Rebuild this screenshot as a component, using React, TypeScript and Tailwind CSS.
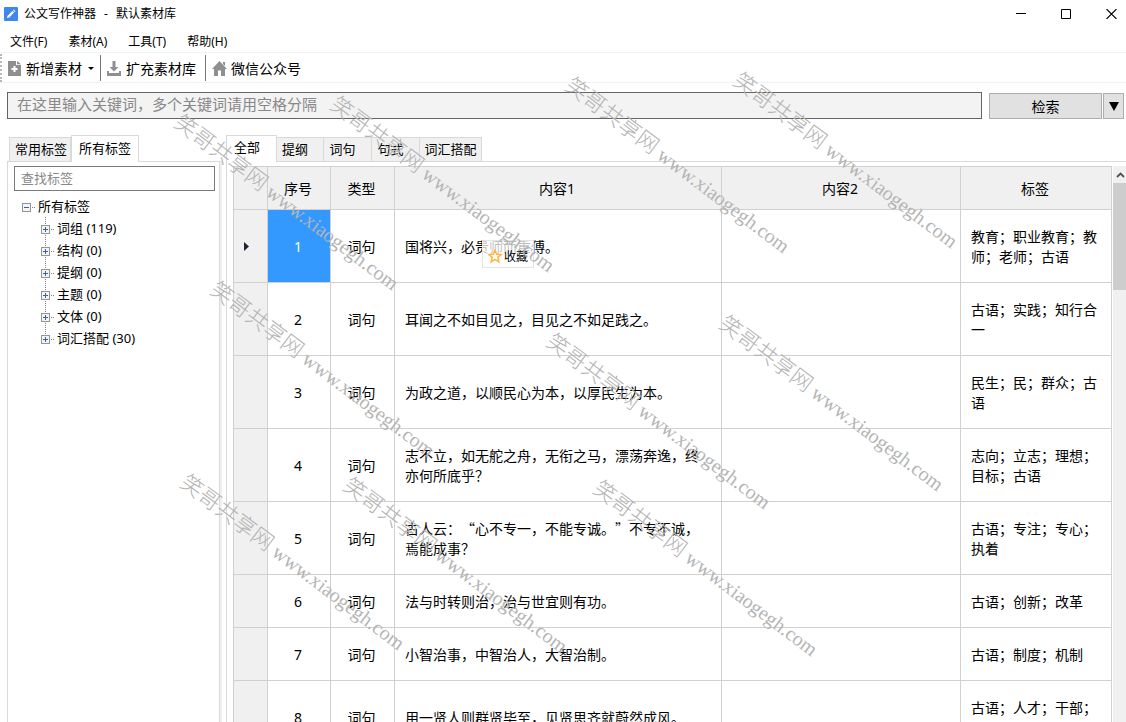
import React from "react";

const TOP_MENU = ["文件(F)", "素材(A)", "工具(T)", "帮助(H)"];

const TREE = ["词组 (119)", "结构 (0)", "提纲 (0)", "主题 (0)", "文体 (0)", "词汇搭配 (30)"];

const KIND_TABS = [
  { label: "提纲", width: "w-[47px] pr-[10px]" },
  { label: "词句", width: "w-12 pr-[10px]" },
  { label: "句式", width: "w-12 pr-[10px]" },
  { label: "词汇搭配", width: "w-[62px]" },
];

const ROWS = [
  { text: "国将兴，必贵师而重傅。", tags: "教育；职业教育；教师；老师；古语" },
  { text: "耳闻之不如目见之，目见之不如足践之。", tags: "古语；实践；知行合一" },
  { text: "为政之道，以顺民心为本，以厚民生为本。", tags: "民生；民；群众；古语" },
  { text: "志不立，如无舵之舟，无衔之马，漂荡奔逸，终亦何所底乎？", tags: "志向；立志；理想；目标；古语" },
  { text: "古人云：“心不专一，不能专诚。”不专不诚，焉能成事？", tags: "古语；专注；专心；执着" },
  { text: "法与时转则治，治与世宜则有功。", tags: "古语；创新；改革" },
  { text: "小智治事，中智治人，大智治制。", tags: "古语；制度；机制" },
  { text: "用一贤人则群贤毕至，见贤思齐就蔚然成风。", tags: "古语；人才；干部；\n\u00a0" },
];

const MARKS = [
  "left-[177px] top-[108px]",
  "left-[333px] top-[90px]",
  "left-[568px] top-[71px]",
  "left-[736px] top-[66px]",
  "left-[213px] top-[275px]",
  "left-[549px] top-[327px]",
  "left-[722px] top-[309px]",
  "left-[183px] top-[468px]",
  "left-[346px] top-[471px]",
  "left-[596px] top-[474px]",
];

function ExpandBox({ open = false }: { open?: boolean }) {
  return (
    <svg width="14" height="9" viewBox="0 0 14 9" shapeRendering="crispEdges" className="mt-[3px] shrink-0" aria-hidden="true">
      <rect x="0.5" y="0.5" width="8" height="8" rx="1" fill="#f4f4f4" stroke="#949494" />
      <path d="M2 4.5h5" stroke="#3b62a8" />
      {!open && <path d="M4.5 2v5" stroke="#3b62a8" />}
      <path d="M10 4.5h1M12 4.5h1" stroke="#808080" />
    </svg>
  );
}

function TitleBar() {
  return (
    <header className="flex h-7 shrink-0 items-center pl-1">
      <svg width="14" height="14" viewBox="0 0 14 14" aria-hidden="true">
        <rect width="14" height="14" rx="1" fill="#3f87f0" />
        <path d="M3 11l.6-2.3 4.8-4.8 1.7 1.7-4.8 4.8z" fill="#fff" />
        <path d="M9 3.3l.8-.8 1.7 1.7-.8.8z" fill="#fff" />
      </svg>
      <h1 className="ml-[6px] flex flex-1 gap-2 text-xs">
        <span>公文写作神器</span>
        <span>-</span>
        <span>默认素材库</span>
      </h1>
      <div className="flex">
        <button aria-label="最小化" className="flex h-7 w-[45px] items-center justify-center">
          <svg width="10" height="10" viewBox="0 0 10 10"><path d="M0 4.5h10" stroke="#000" /></svg>
        </button>
        <button aria-label="最大化" className="flex h-7 w-[46px] items-center justify-center">
          <svg width="10" height="10" viewBox="0 0 10 10"><path d="M.5.5h9v9h-9z" fill="none" stroke="#000" /></svg>
        </button>
        <button aria-label="关闭" className="flex h-7 w-[37px] items-center justify-center pl-2">
          <svg width="11" height="10" viewBox="0 0 11 10"><path d="M.5 0l10 10M10.500 0l-10 10" stroke="#000" strokeWidth="1.100" /></svg>
        </button>
      </div>
    </header>
  );
}

function Toolbar() {
  return (
    <div className="flex h-[31px] shrink-0 items-center border-y border-[#eef5f5] text-sm">
      <span className="h-7 border-l-2 border-dotted border-[#b8b8b8]" />
      <button className="flex items-center pl-[6px] pt-px">
        <svg width="13" height="15" viewBox="0 0 13 15" aria-hidden="true">
          <path d="M0 0h8v4h5v11H0z" fill="#8f8f8f" />
          <path d="M9 0l4 3.300H9z" fill="#8f8f8f" />
          <path d="M6.500 5v6M3.500 8h6" stroke="#fff" strokeWidth="2" />
        </svg>
        <span className="ml-[5px] pt-px">新增素材</span>
        <svg width="6" height="3" viewBox="0 0 6 3" className="ml-[6px]" aria-hidden="true"><path d="M0 0h6L3 3z" /></svg>
      </button>
      <span className="ml-[6px] h-[26px] w-px bg-[#777]" />
      <button className="flex items-center pl-[6px] pt-px">
        <svg width="14" height="15" viewBox="0 0 14 15" aria-hidden="true">
          <path d="M5.500 0h3v6h3L7 10.500 2.500 6h3z" fill="#8f8f8f" />
          <path d="M0 10h2v2h10v-2h2v5H0z" fill="#8f8f8f" />
        </svg>
        <span className="ml-[5px] pt-px">扩充素材库</span>
      </button>
      <span className="ml-[9px] h-[26px] w-px bg-[#777]" />
      <button className="flex items-center pl-[6px] pt-px">
        <svg width="15" height="15" viewBox="0 0 15 15" aria-hidden="true">
          <path d="M7.500 0L15 8h-2v7H9V9.500H6V15H2V8H0z" fill="#8f8f8f" />
          <path d="M11 1h2v4l-2-2z" fill="#8f8f8f" />
        </svg>
        <span className="ml-1 pt-px">微信公众号</span>
      </button>
    </div>
  );
}

function SearchRow() {
  return (
    <form className="mt-[9px] flex h-[27px] shrink-0 items-end pl-[7px] pr-[2px]" onSubmit={(e) => e.preventDefault()}>
      <input
        aria-label="关键词"
        placeholder="在这里输入关键词，多个关键词请用空格分隔"
        className="h-[27px] min-w-0 flex-1 border border-[#646464] bg-[#f3f3f3] px-[9px] pb-[3px] text-[15px] outline-none placeholder:text-[#888]"
      />
      <button className="ml-[7px] h-[26px] w-[113px] border border-[#adadad] bg-[#e1e1e1] pt-px text-sm">检索</button>
      <button aria-label="检索选项" className="ml-px flex h-[26px] w-[21px] items-center justify-center border border-[#adadad] bg-[#e1e1e1]">
        <svg width="10" height="9" viewBox="0 0 10 9" aria-hidden="true"><path d="M0 0h10L5 9z" /></svg>
      </button>
    </form>
  );
}

function TagPanel() {
  return (
    <aside className="ml-[7px] flex w-[213px] shrink-0 flex-col">
      <div role="tablist" className="flex items-end pl-[2px] text-[13px]">
        <button role="tab" aria-selected="false" className="h-6 w-[62px] border border-b-0 border-[#d9d9d9] bg-[#f0f0f0] pl-[2px] pr-0">常用标签</button>
        <button role="tab" aria-selected="true" className="relative -mb-px h-[27px] w-[68px] border border-b-0 border-[#d9d9d9] bg-white">所有标签</button>
      </div>
      <div className="flex-1 border border-b-0 border-[#d9d9d9] px-[6px] pt-[3px]">
        <input
          aria-label="查找标签"
          placeholder="查找标签"
          className="h-[25px] w-[201px] border border-[#7a7a7a] px-[6px] text-[13px] outline-none placeholder:text-[#888]"
        />
        <div role="tree" className="mt-1 pl-2 text-[13px] leading-[22px]">
          <div role="treeitem" aria-expanded="true">
            <div className="flex items-center gap-[2px]"><ExpandBox open />所有标签</div>
            <div role="group" className="relative pl-[19px]">
              <span className="absolute bottom-[11px] left-[23px] top-0 border-l border-dotted border-[#808080]" />
              {TREE.map((label) => (
                <div key={label} role="treeitem" aria-expanded="false" className="relative flex items-center gap-[2px]">
                  <ExpandBox />
                  {label}
                </div>
              ))}
            </div>
          </div>
        </div>
      </div>
    </aside>
  );
}

function FavoriteTip() {
  return (
    <button className="absolute left-[87px] top-[30px] flex h-7 w-[52px] items-center gap-[2px] border border-[#e4e4e4] bg-white/75 pl-[5px] pt-1 text-xs">
      <svg width="14" height="14" viewBox="0 0 14 14" aria-hidden="true">
        <path d="M7 1l1.700 4.200 4.500.3-3.400 2.900 1 4.400L7 10.400l-3.800 2.400 1-4.400L.8 5.500l4.500-.3z" fill="none" stroke="#ffb43c" strokeWidth="1.500" />
      </svg>
      收藏
    </button>
  );
}

function MaterialTable() {
  return (
    <table className="w-full table-fixed border-separate border-spacing-0 border-l border-t border-[#d0d0d0] text-sm leading-5">
      <colgroup>
        <col className="w-[34px]" />
        <col className="w-[63px]" />
        <col className="w-16" />
        <col className="w-[327px]" />
        <col />
        <col className="w-[151px]" />
      </colgroup>
      <thead>
        <tr className="h-[43px] bg-[#f0f0f0]">
          <th className="border-b border-r border-[#d0d0d0]" aria-label="当前行" />
          {["序号", "类型", "内容1", "内容2", "标签"].map((name) => (
            <th key={name} scope="col" className="border-b border-r border-[#d0d0d0] pr-[2px] pt-[2px] font-normal">{name}</th>
          ))}
        </tr>
      </thead>
      <tbody>
        {ROWS.map((row, i) => (
          <tr key={row.text}>
            <td className="border-b border-r border-[#d0d0d0] bg-[#f0f0f0]">
              {i === 0 && (
                <svg width="5" height="9" viewBox="0 0 5 9" className="ml-[10px]" aria-hidden="true"><path d="M0 0l5 4.500L0 9z" fill="#223" /></svg>
              )}
            </td>
            <td className={i === 0 ? "border-b border-r border-[#d0d0d0] bg-[#3399ff] pr-[2px] pt-[2px] text-center text-white" : "border-b border-r border-[#d0d0d0] pr-[2px] pt-[2px] text-center"}>{i + 1}</td>
            <td className="border-b border-r border-[#d0d0d0] pr-[2px] pt-[2px] text-center">词句</td>
            <td className="relative border-b border-r border-[#d0d0d0] px-[10px] py-4 font-['Noto_Sans_CJK_SC',sans-serif] [text-spacing-trim:space-all]">
              {row.text}
              {i === 0 && <FavoriteTip />}
            </td>
            <td className="border-b border-r border-[#d0d0d0]" />
            <td className="whitespace-pre-line border-b border-r border-[#d0d0d0] px-[10px] py-4 font-['Noto_Sans_CJK_SC',sans-serif]">{row.tags}</td>
          </tr>
        ))}
      </tbody>
    </table>
  );
}

function MaterialPanel() {
  return (
    <main className="flex min-w-0 flex-1 flex-col">
      <div role="tablist" className="flex items-end text-[13px]">
        <button role="tab" aria-selected="true" className="relative -mb-px h-[27px] w-[51px] border border-b-0 border-[#d9d9d9] bg-white pb-[2px] pr-[9px]">全部</button>
        {KIND_TABS.map((tab) => (
          <button key={tab.label} role="tab" aria-selected="false" className={`${tab.width} h-6 whitespace-nowrap border border-b-0 border-l-0 border-[#d9d9d9] bg-[#f0f0f0]`}>
            {tab.label}
          </button>
        ))}
      </div>
      <div className="flex min-h-0 flex-1 overflow-hidden border-l border-t border-[#d9d9d9] pl-[6px] pt-1">
        <div className="min-w-0 flex-1 overflow-hidden">
          <MaterialTable />
        </div>
        <div className="ml-px w-[13px] shrink-0 bg-[#f0f0f0]">
          <button aria-label="向上滚动" className="flex h-[17px] w-full items-center justify-center pl-[2px]">
            <svg width="9" height="6" viewBox="0 0 9 6"><path d="M1 5l3.500-3.500L8 5" fill="none" stroke="#505050" strokeWidth="1.800" /></svg>
          </button>
          <div className="h-[107px] bg-[#cdcdcd]" />
        </div>
      </div>
    </main>
  );
}

export default function App() {
  return (
    <div lang="zh-CN" className="relative flex h-screen flex-col overflow-hidden bg-white font-['Noto_Sans','Noto_Sans_CJK_SC',sans-serif] text-black">
      <TitleBar />
      <nav className="flex h-6 shrink-0 items-center gap-[21px] pl-[10px] pt-1 text-xs">
        {TOP_MENU.map((item) => (
          <button key={item}>{item}</button>
        ))}
      </nav>
      <Toolbar />
      <SearchRow />
      <div className="mt-4 flex min-h-0 flex-1">
        <TagPanel />
        <div className="mr-1 mt-[26px] w-[2px] shrink-0 bg-[#f0f0f0]" />
        <MaterialPanel />
      </div>
      <div aria-hidden="true" className="pointer-events-none absolute inset-0 overflow-hidden">
        {MARKS.map((place) => (
          <span
            key={place}
            className={`${place} absolute origin-left rotate-[37deg] whitespace-nowrap font-['Liberation_Serif','Noto_Sans_CJK_SC',serif] text-xl font-light leading-6 text-[#b4b4b4]`}
          >
            <span className="text-[22px]">笑哥共享网</span> www.xiaogegh.com
          </span>
        ))}
      </div>
    </div>
  );
}
